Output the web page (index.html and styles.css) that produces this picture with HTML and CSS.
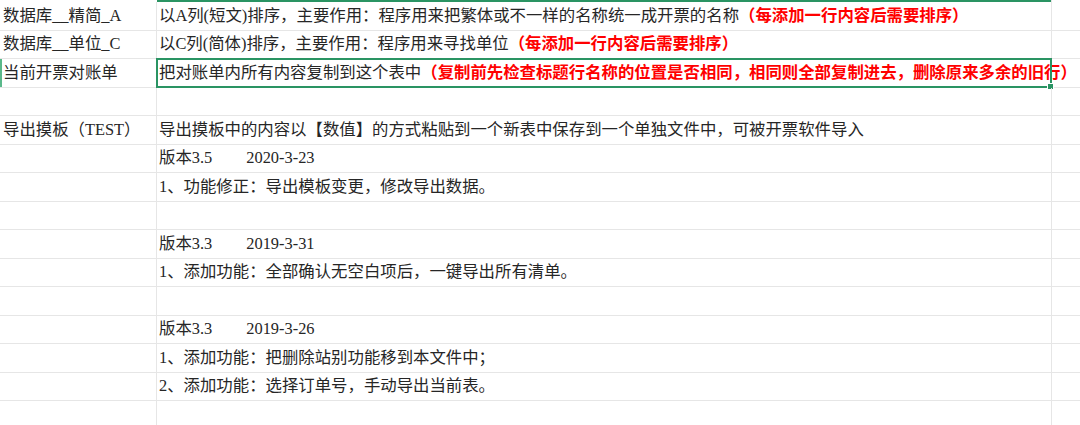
FILE: index.html
```html
<!DOCTYPE html>
<html lang="zh-CN">
<head>
<meta charset="utf-8">
<title>Sheet</title>
<link rel="stylesheet" href="styles.css">
</head>
<body>
<div class="sheet">
  <div class="row strip"><div class="c1"></div><div class="c2 strip-sel"></div><div class="c3"></div></div>

  <div class="row"><div class="c1">数据库__精简_A</div><div class="c2">以A列(短文)排序，主要作用：程序用来把繁体或不一样的名称统一成开票的名称<span class="red">（每添加一行内容后需要排序）</span></div><div class="c3"></div></div>
  <div class="row"><div class="c1">数据库__单位_C</div><div class="c2">以C列(简体)排序，主要作用：程序用来寻找单位<span class="red">（每添加一行内容后需要排序）</span></div><div class="c3"></div></div>
  <div class="row"><div class="c1 row-active">当前开票对账单</div><div class="c2 active">把对账单内所有内容复制到这个表中<span class="red">（复制前先检查标题行名称的位置是否相同，相同则全部复制进去，删除原来多余的旧行）</span><div class="sel"><div class="handle"></div></div></div><div class="c3"></div></div>
  <div class="row"><div class="c1"></div><div class="c2"></div><div class="c3"></div></div>
  <div class="row"><div class="c1">导出摸板（TEST）</div><div class="c2">导出摸板中的内容以【数值】的方式粘贴到一个新表中保存到一个单独文件中，可被开票软件导入</div><div class="c3"></div></div>
  <div class="row"><div class="c1"></div><div class="c2">版本3.5<span class="date">2020-3-23</span></div><div class="c3"></div></div>
  <div class="row"><div class="c1"></div><div class="c2">1、功能修正：导出模板变更，修改导出数据。</div><div class="c3"></div></div>
  <div class="row"><div class="c1"></div><div class="c2"></div><div class="c3"></div></div>
  <div class="row"><div class="c1"></div><div class="c2">版本3.3<span class="date">2019-3-31</span></div><div class="c3"></div></div>
  <div class="row"><div class="c1"></div><div class="c2">1、添加功能：全部确认无空白项后，一键导出所有清单。</div><div class="c3"></div></div>
  <div class="row"><div class="c1"></div><div class="c2"></div><div class="c3"></div></div>
  <div class="row"><div class="c1"></div><div class="c2">版本3.3<span class="date">2019-3-26</span></div><div class="c3"></div></div>
  <div class="row"><div class="c1"></div><div class="c2">1、添加功能：把删除站别功能移到本文件中；</div><div class="c3"></div></div>
  <div class="row"><div class="c1"></div><div class="c2">2、添加功能：选择订单号，手动导出当前表。</div><div class="c3"></div></div>
  <div class="row"><div class="c1"></div><div class="c2"></div><div class="c3"></div></div>
</div>
</body>
</html>
```

FILE: styles.css
```css
html, body {
  margin: 0;
  padding: 0;
  background: #ffffff;
}

body {
  width: 1080px;
  height: 425px;
  overflow: hidden;
  font-family: "Liberation Serif", "Noto Sans CJK SC", serif;
  font-size: 16.4px;
  color: #262626;
}

.sheet {
  display: flex;
  flex-direction: column;
}

.row {
  display: grid;
  grid-template-columns: 157px 895px 1fr;
  height: 28.5px;
  box-sizing: border-box;
  border-bottom: 1px solid #e6e6e6;
}

.row.strip {
  height: 2px;
  border-bottom: none;
}

.strip-sel {
  background: #2a9463;
}

.c1, .c2, .c3 {
  display: flex;
  align-items: center;
  white-space: nowrap;
  line-height: 1;
}

.c1 {
  padding-left: 3px;
  border-right: 1px solid #e6e6e6;
}

.strip .c1 {
  border-right: none;
}

.c2 {
  padding-left: 2px;
  border-right: 1px solid #e6e6e6;
  position: relative;
  overflow: visible;
}

.c3 {
  min-width: 0;
}

.red {
  color: #ff0000;
  font-weight: bold;
}

.date {
  margin-left: 34px;
}

.row-active {
  box-shadow: inset 2px 0 0 #5ab88a;
}

.sel {
  position: absolute;
  top: -1px;
  left: -1px;
  right: -1px;
  bottom: -1px;
  border: 2px solid #2a9463;
  pointer-events: none;
}

.handle {
  position: absolute;
  right: -4px;
  bottom: -4px;
  width: 5px;
  height: 5px;
  background: #2a9463;
  border: 1px solid #ffffff;
}
```
